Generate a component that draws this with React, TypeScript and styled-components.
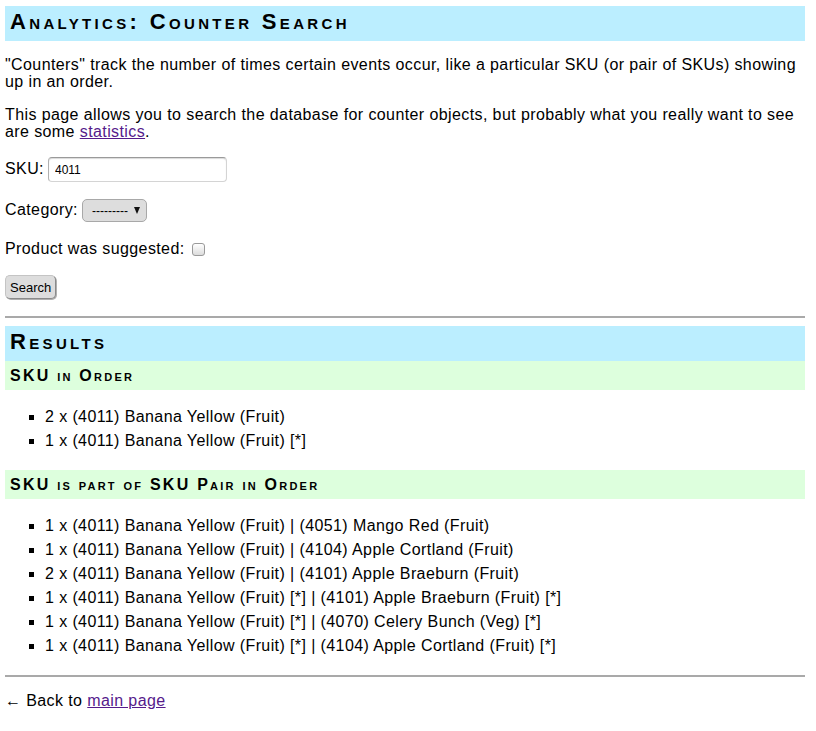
import React from 'react';
import styled, { createGlobalStyle } from 'styled-components';

const GlobalStyle = createGlobalStyle`
  html, body { margin: 0; padding: 0; background: #ffffff; }
  body {
    font-family: "Liberation Sans", Arial, sans-serif;
    font-size: 16px;
    color: #000000;
  }
`;

const Page = styled.div`
  width: 800px;
  padding: 6px 5px 20px;
  letter-spacing: 0.4px;
`;

const Title = styled.h1`
  margin: 0;
  padding: 3px 5px 7px;
  background: #bbeeff;
  font-size: 22px;
  line-height: 25px;
  font-weight: bold;
  font-variant: small-caps;
  letter-spacing: 0.152em;
`;

const SubTitle = styled.h3`
  margin: 0;
  padding: 5px 5px;
  background: #ddffdd;
  font-size: 16px;
  line-height: 19px;
  font-weight: bold;
  font-variant: small-caps;
  letter-spacing: 0.14em;
`;

const Para = styled.p`
  margin: 15px 0 16px;
  line-height: 17px;
`;

const Link = styled.a`
  color: #551a8b;
  text-decoration: underline;
`;

const Form = styled.form`
  display: flex;
  flex-direction: column;
  align-items: flex-start;
  gap: 17px;
  margin-top: 17px;
`;

const Field = styled.div`
  display: flex;
  align-items: baseline;
  gap: 4px;
  line-height: 17px;
`;

const CheckField = styled(Field)`
  align-items: center;
  padding-top: 1px;
  line-height: 18px;
`;

const TextInput = styled.input`
  box-sizing: border-box;
  width: 179px;
  height: 25px;
  padding: 2px 6px;
  font-family: "Liberation Sans", Arial, sans-serif;
  font-size: 12px;
  color: #000;
  border: 1px solid #d4d4d4;
  border-top-color: #9a9a9a;
  border-left-color: #b0b0b0;
  border-radius: 4px;
  box-shadow: inset 0 1px 1px rgba(0, 0, 0, 0.15);
  background: #fff;
  outline: none;
`;

const SelectWrap = styled.span`
  position: relative;
  display: inline-block;
`;

const Select = styled.select`
  box-sizing: border-box;
  appearance: none;
  -webkit-appearance: none;
  width: 65px;
  height: 23px;
  padding: 0 18px 0 9px;
  font-family: "Liberation Sans", Arial, sans-serif;
  font-size: 12px;
  color: #000;
  background: #dddddd;
  border: 1px solid #a8a8a8;
  border-radius: 5px;
  outline: none;
`;

const Arrow = styled.span`
  position: absolute;
  right: 7px;
  top: 8px;
  width: 0;
  height: 0;
  border-left: 3.5px solid transparent;
  border-right: 3.5px solid transparent;
  border-top: 7px solid #111;
  pointer-events: none;
`;

const Check = styled.input`
  appearance: none;
  -webkit-appearance: none;
  box-sizing: border-box;
  width: 13px;
  height: 13px;
  margin: 0 0 0 3px;
  border: 1px solid #9a9a9a;
  border-radius: 3px;
  background: linear-gradient(#ffffff, #dcdcdc);
`;

const Button = styled.button`
  box-sizing: border-box;
  height: 24px;
  padding: 0 4px;
  font-family: "Liberation Sans", Arial, sans-serif;
  font-size: 13px;
  color: #000;
  background: #dddddd;
  border: 1px solid #c4c4c4;
  border-right-color: #8a8a8a;
  border-bottom-color: #8a8a8a;
  border-radius: 5px;
  box-shadow: 1px 1px 0 #b0b0b0;
`;

const Rule = styled.hr<{ $top: number; $bottom: number }>`
  margin: ${(p) => p.$top}px 0 ${(p) => p.$bottom}px;
  height: 0;
  border: none;
  border-top: 2px solid #a9a9a9;
`;

const List = styled.ul`
  margin: 15px 0 17px;
  padding-left: 40px;
  list-style: square;
`;

const Item = styled.li`
  line-height: 24px;
`;

const Footer = styled.p`
  margin: 15px 0 0;
  line-height: 17px;
`;

const inOrder = [
  '2 x (4011) Banana Yellow (Fruit)',
  '1 x (4011) Banana Yellow (Fruit) [*]',
];

const inPair = [
  '1 x (4011) Banana Yellow (Fruit) | (4051) Mango Red (Fruit)',
  '1 x (4011) Banana Yellow (Fruit) | (4104) Apple Cortland (Fruit)',
  '2 x (4011) Banana Yellow (Fruit) | (4101) Apple Braeburn (Fruit)',
  '1 x (4011) Banana Yellow (Fruit) [*] | (4101) Apple Braeburn (Fruit) [*]',
  '1 x (4011) Banana Yellow (Fruit) [*] | (4070) Celery Bunch (Veg) [*]',
  '1 x (4011) Banana Yellow (Fruit) [*] | (4104) Apple Cortland (Fruit) [*]',
];

export default function App() {
  return (
    <>
      <GlobalStyle />
      <Page>
        <Title>Analytics: Counter Search</Title>
        <Para>
          "Counters" track the number of times certain events occur, like a particular SKU (or pair of SKUs) showing
          up in an order.
        </Para>
        <Para>
          This page allows you to search the database for counter objects, but probably what you really want to see
          are some <Link href="#">statistics</Link>.
        </Para>
        <Form onSubmit={(e) => e.preventDefault()}>
          <Field>
            <span>SKU:</span>
            <TextInput type="text" defaultValue="4011" />
          </Field>
          <Field>
            <span>Category:</span>
            <SelectWrap>
              <Select defaultValue="">
                <option value="">---------</option>
              </Select>
              <Arrow />
            </SelectWrap>
          </Field>
          <CheckField>
            <span>Product was suggested:</span>
            <Check type="checkbox" />
          </CheckField>
          <Button type="submit">Search</Button>
        </Form>
        <Rule $top={17} $bottom={8} />
        <Title as="h2">Results</Title>
        <SubTitle>SKU in Order</SubTitle>
        <List>
          {inOrder.map((t, i) => (
            <Item key={i}>{t}</Item>
          ))}
        </List>
        <SubTitle>SKU is part of SKU Pair in Order</SubTitle>
        <List>
          {inPair.map((t, i) => (
            <Item key={i}>{t}</Item>
          ))}
        </List>
        <Rule $top={17} $bottom={0} />
        <Footer>
          ← Back to <Link href="#">main page</Link>
        </Footer>
      </Page>
    </>
  );
}
